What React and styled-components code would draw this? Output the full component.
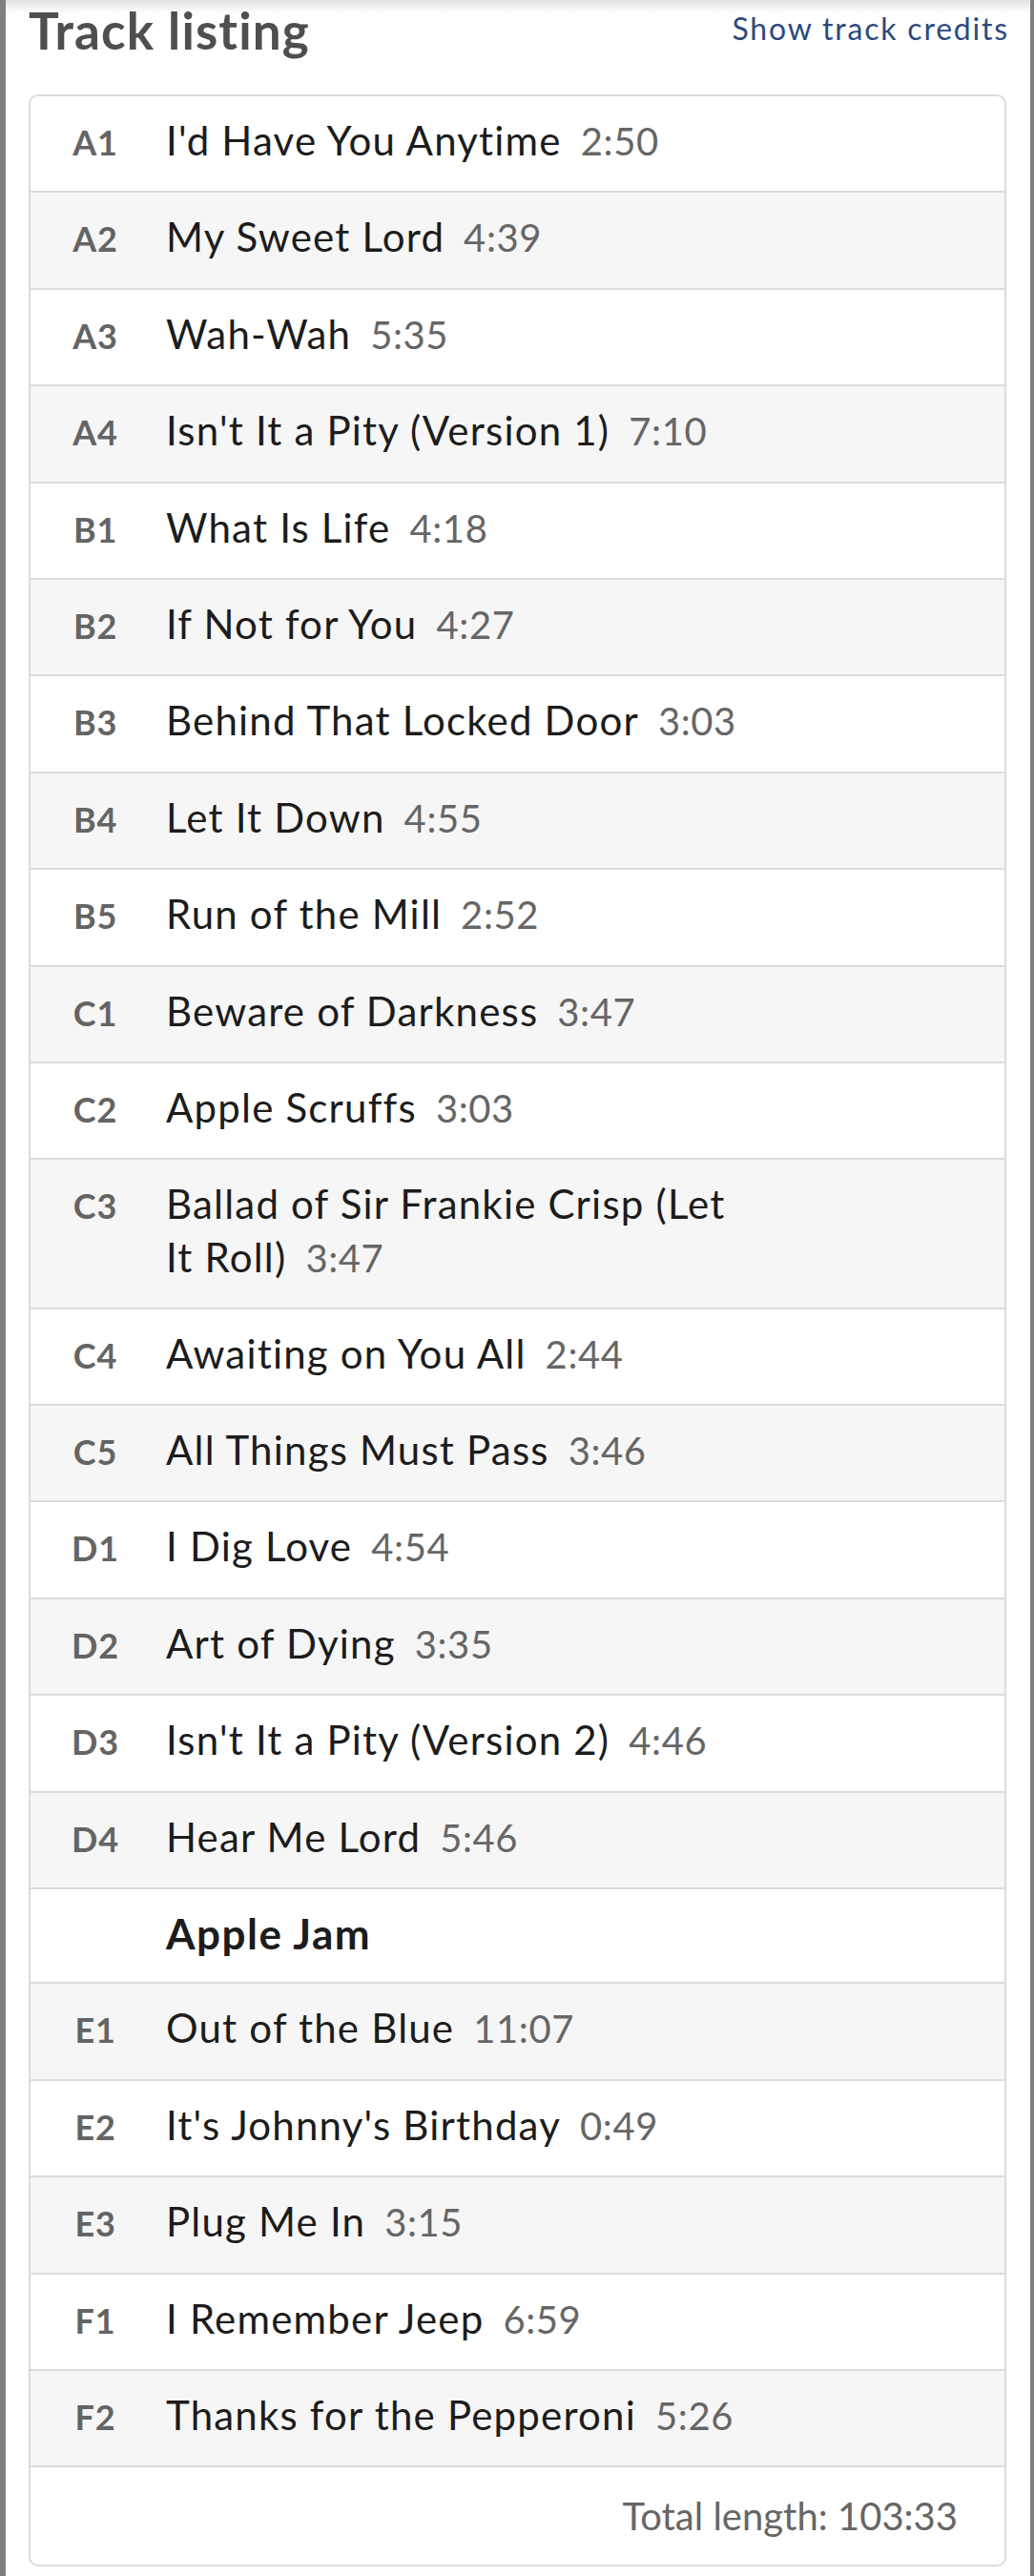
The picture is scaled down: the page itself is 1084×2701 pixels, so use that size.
import React from "react";
import styled, { createGlobalStyle } from "styled-components";

const GlobalStyle = createGlobalStyle`
  html, body {
    margin: 0;
    padding: 0;
    background: #808080;
  }
  body {
    font-family: Lato, "Open Sans", "Liberation Sans", sans-serif;
  }
`;

const Page = styled.div`
  background: linear-gradient(#e2e2e2 0, #ffffff 14px);
  margin: 0 4px 0 6px;
  min-height: 2701px;
  box-sizing: border-box;
  padding: 0 25px 10px 24px;
`;

const Header = styled.div`
  display: flex;
  justify-content: space-between;
  align-items: flex-start;
`;

const Heading = styled.h2`
  margin: 0;
  font-size: 53px;
  font-weight: 700;
  line-height: normal;
  color: #4f4f4f;
  letter-spacing: 1.1px;
`;

const CreditsLink = styled.a`
  margin: 10px -3px 0 0;
  font-size: 32px;
  line-height: normal;
  color: #2e4a7c;
  text-decoration: none;
  letter-spacing: 1.8px;
`;

const Card = styled.div`
  margin-top: 36px;
  border: 2px solid #dcdcdc;
  border-radius: 10px;
  overflow: hidden;
  background: #fff;
`;

const Row = styled.div`
  display: grid;
  grid-template-columns: 136px 612px 1fr;
  align-items: baseline;
  padding: 18px 0 23.4px;
  line-height: 56px;
  border-bottom: 2px solid #dcdcdc;
  &:nth-child(even) {
    background: #f6f6f6;
  }
`;

const Position = styled.span`
  text-align: center;
  font-size: 36px;
  font-weight: 700;
  color: #646464;
  letter-spacing: 0.8px;
`;

const Title = styled.span`
  padding-left: 6px;
  font-size: ${p => (p.$heading ? "44px" : "42px")};
  font-weight: ${p => (p.$heading ? 700 : 400)};
  color: #1c1c1c;
  letter-spacing: ${p => (p.$heading ? "1.5px" : "1.2px")};
`;

const Duration = styled.span`
  margin-left: 20px;
  font-size: 40px;
  color: #666;
  letter-spacing: 0.6px;
`;

const TotalRow = styled.div`
  display: flex;
  justify-content: flex-end;
  padding: 23px 49px 23px 0;
  line-height: 56px;
  font-size: 40px;
  color: #666;
`;

const tracks = [
  ["A1", "I'd Have You Anytime", "2:50"],
  ["A2", "My Sweet Lord", "4:39"],
  ["A3", "Wah-Wah", "5:35"],
  ["A4", "Isn't It a Pity (Version 1)", "7:10"],
  ["B1", "What Is Life", "4:18"],
  ["B2", "If Not for You", "4:27"],
  ["B3", "Behind That Locked Door", "3:03"],
  ["B4", "Let It Down", "4:55"],
  ["B5", "Run of the Mill", "2:52"],
  ["C1", "Beware of Darkness", "3:47"],
  ["C2", "Apple Scruffs", "3:03"],
  ["C3", "Ballad of Sir Frankie Crisp (Let It Roll)", "3:47"],
  ["C4", "Awaiting on You All", "2:44"],
  ["C5", "All Things Must Pass", "3:46"],
  ["D1", "I Dig Love", "4:54"],
  ["D2", "Art of Dying", "3:35"],
  ["D3", "Isn't It a Pity (Version 2)", "4:46"],
  ["D4", "Hear Me Lord", "5:46"],
  ["", "Apple Jam", null],
  ["E1", "Out of the Blue", "11:07"],
  ["E2", "It's Johnny's Birthday", "0:49"],
  ["E3", "Plug Me In", "3:15"],
  ["F1", "I Remember Jeep", "6:59"],
  ["F2", "Thanks for the Pepperoni", "5:26"],
];

export default function App() {
  return (
    <>
      <GlobalStyle />
      <Page>
        <Header>
          <Heading>Track listing</Heading>
          <CreditsLink href="#">Show track credits</CreditsLink>
        </Header>
        <Card>
          {tracks.map(([pos, title, dur]) => (
            <Row key={title}>
              <Position>{pos}</Position>
              <Title $heading={!dur}>
                {title}
                {dur && <Duration>{dur}</Duration>}
              </Title>
            </Row>
          ))}
          <TotalRow>Total length: 103:33</TotalRow>
        </Card>
      </Page>
    </>
  );
}
